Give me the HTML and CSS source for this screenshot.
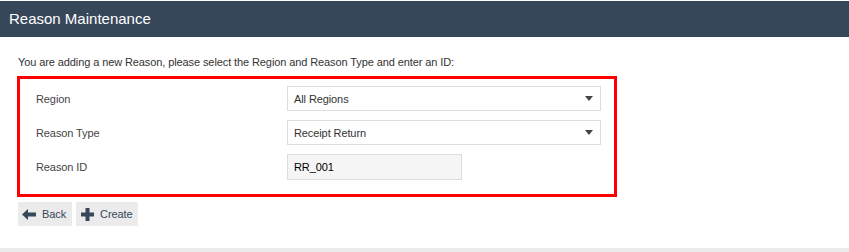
FILE: index.html
```html
<!DOCTYPE html>
<html lang="en">
<head>
    <meta charset="UTF-8">
    <title>Reason Maintenance</title>
    <link rel="stylesheet" href="styles.css">
</head>
<body>
    <div class="page-header">Reason Maintenance</div>
    <div class="content">
        <p class="intro">You are adding a new Reason, please select the Region and Reason Type and enter an ID:</p>
        <div class="form-box">
            <!-- Form rows -->
            <div class="form-row">
                <span class="form-label">Region</span>
                <div class="select-box">
                    <span>All Regions</span>
                    <span class="caret"></span>
                </div>
            </div>
            <div class="form-row">
                <span class="form-label">Reason Type</span>
                <div class="select-box">
                    <span>Receipt Return</span>
                    <span class="caret"></span>
                </div>
            </div>
            <div class="form-row">
                <span class="form-label">Reason ID</span>
                <input type="text" class="id-input" value="RR_001" readonly>
            </div>
        </div>
        <div class="actions">
            <button class="btn btn-back">
                <svg width="14" height="11" viewBox="0 0 14 11"><path d="M0 5.5 L6 0 L6 3.5 L14 3.5 L14 7.5 L6 7.5 L6 11 Z" fill="#37475a"/></svg>
                Back
            </button>
            <button class="btn btn-create">
                <svg width="13" height="13" viewBox="0 0 13 13"><path d="M4.5 0 H8.5 V4.5 H13 V8.5 H8.5 V13 H4.5 V8.5 H0 V4.5 H4.5 Z" fill="#37475a"/></svg>
                Create
            </button>
        </div>
    </div>
    <div class="footer-bar"></div>
</body>
</html>
```

FILE: styles.css
```css
body {
    margin: 0;
    padding-top: 1px;
    font-family: "Liberation Sans", Arial, sans-serif;
    background-color: #fff;
    width: 849px;
    height: 252px;
    box-sizing: border-box;
    overflow: hidden;
    display: flex;
    flex-direction: column;
}
.page-header {
    height: 36px;
    line-height: 36px;
    background-color: #37475a;
    color: #fff;
    font-size: 15px;
    padding-left: 9px;
}
.content {
    flex: 1;
    padding: 0 17px;
}
.intro {
    margin: 18px 0 0 1px;
    font-size: 11px;
    letter-spacing: -0.1px;
    color: #333;
    line-height: 14px;
}
.form-box {
    margin-top: 7px;
    width: 594px;
    border: 3px solid #f00;
    padding: 7px 0 14px 0;
    display: flex;
    flex-direction: column;
    gap: 9px;
}
.form-row {
    display: flex;
    align-items: center;
}
.form-label {
    box-sizing: border-box;
    width: 267px;
    padding-left: 16px;
    font-size: 11px;
    letter-spacing: -0.1px;
    color: #444;
}
.select-box {
    box-sizing: border-box;
    width: 314px;
    height: 25px;
    border: 1px solid #ddd;
    background: #fff;
    display: flex;
    align-items: center;
    justify-content: space-between;
    padding: 0 7px 0 6px;
    font-size: 11px;
    letter-spacing: -0.1px;
    color: #333;
}
.caret {
    width: 0;
    height: 0;
    border-left: 4px solid transparent;
    border-right: 4px solid transparent;
    border-top: 5px solid #444;
}
.id-input {
    box-sizing: border-box;
    width: 175px;
    height: 26px;
    border: 1px solid #ddd;
    background: #f5f5f5;
    padding: 0 6px;
    font-family: "Liberation Sans", Arial, sans-serif;
    font-size: 11px;
    letter-spacing: -0.1px;
    color: #000;
    outline: none;
}
.actions {
    display: flex;
    gap: 4px;
    margin-top: 5px;
    margin-left: 1px;
}
.btn {
    display: flex;
    align-items: center;
    gap: 6px;
    height: 24px;
    padding: 0 6px 0 4px;
    border: none;
    background: #ebebeb;
    color: #37475a;
    font-family: "Liberation Sans", Arial, sans-serif;
    font-size: 11px;
    letter-spacing: -0.1px;
}
.btn-create {
    padding-left: 5px;
}
.footer-bar {
    height: 4px;
    background: #ebebeb;
}
```
